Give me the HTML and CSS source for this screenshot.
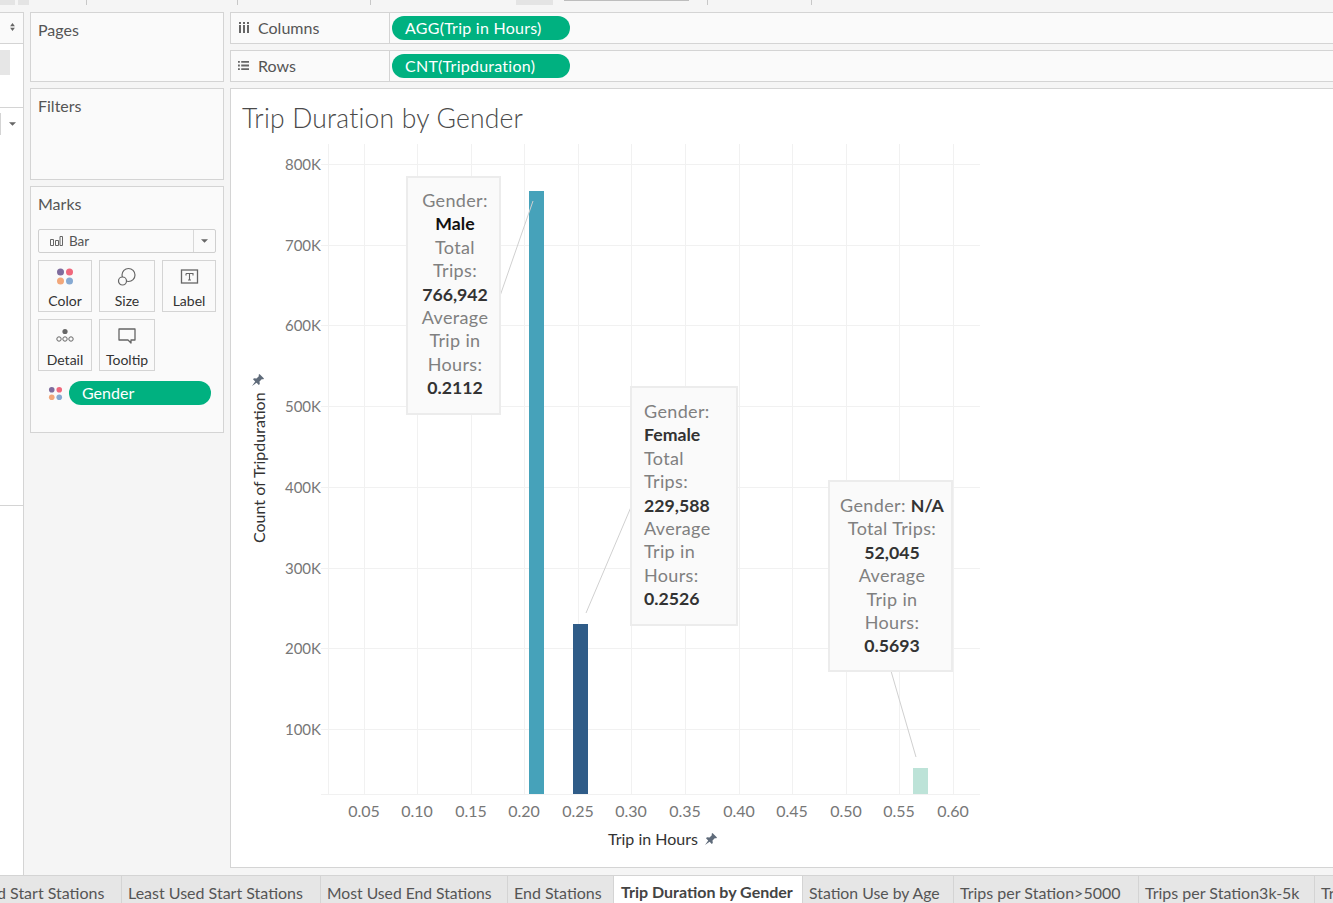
FILE: index.html
```html
<!DOCTYPE html>
<html lang="en">
<head>
<meta charset="utf-8">
<title>Trip Duration by Gender</title>
<link rel="stylesheet" href="styles.css">
</head>
<body>
<div class="topbar">
  <span class="tb-btn tb-a"></span><span class="tb-btn tb-b"></span>
  <span class="tb-tick t1"></span><span class="tb-tick t2"></span><span class="tb-tick t3"></span>
  <span class="tb-btn tb-c"></span><span class="tb-under"></span>
  <span class="tb-tick t4"></span><span class="tb-tick t5"></span>
</div>
<div class="workspace">
  <aside class="data-pane">
    <div class="dp-head"><svg class="updown" viewBox="0 0 6 10"><path d="M3 0 6 4H0zM3 10 0 6h6z"/></svg></div>
    <div class="dp-list"><span class="dp-sel"></span></div>
    <div class="dp-drop"><span class="dp-box"></span><svg class="caret" viewBox="0 0 8 4"><path d="M0 0h8L4 4z"/></svg></div>
    <div class="dp-fields"></div>
    <div class="dp-rest"></div>
  </aside>
  <section class="cards">
    <div class="card pages">Pages</div>
    <div class="card filters">Filters</div>
    <div class="card marks">
      <div class="marks-title">Marks</div>
      <div class="mark-select">
        <svg class="bar-ico" viewBox="0 0 13 10"><path d="M.5 3.500h3v6h-3zM5.500 4.500h3v5h-3zM10 .5h2.500v9H10z" fill="none" stroke="#666"/></svg>
        <span class="ms-label">Bar</span>
        <span class="ms-arrow"><svg class="caret" viewBox="0 0 8 4"><path d="M0 0h8L4 4z"/></svg></span>
      </div>
      <div class="mark-grid">
        <div class="mark-btn">
          <svg class="mb-ico" viewBox="0 0 20 20"><circle cx="5.500" cy="5" r="3.500" fill="#7f6c9d"/><circle cx="14.500" cy="5" r="3.500" fill="#f0687c"/><circle cx="5.500" cy="14" r="3.500" fill="#f2a77a"/><circle cx="14.500" cy="14" r="3.500" fill="#86a9d2"/></svg>
          <span>Color</span>
        </div>
        <div class="mark-btn">
          <svg class="mb-ico" viewBox="0 0 20 20"><circle cx="11.500" cy="8" r="6.500" fill="none" stroke="#666" stroke-width="1.200"/><circle cx="5.500" cy="14" r="4" fill="#fafafa" stroke="#666" stroke-width="1.200"/></svg>
          <span>Size</span>
        </div>
        <div class="mark-btn">
          <svg class="mb-ico" viewBox="0 0 20 20"><rect x="2.500" y="3" width="16" height="13" fill="none" stroke="#666" stroke-width="1.300"/><path d="M7 6.500h7v2M7 6.500v2M10.500 6.500v6.500M9 13h3" fill="none" stroke="#666" stroke-width="1.100"/></svg>
          <span>Label</span>
        </div>
        <div class="mark-btn">
          <svg class="mb-ico" viewBox="0 0 20 20"><circle cx="10" cy="5.500" r="2.600" fill="#666"/><g fill="none" stroke="#666"><circle cx="4" cy="13" r="2.200"/><circle cx="10" cy="13" r="2.200"/><circle cx="16" cy="13" r="2.200"/></g></svg>
          <span>Detail</span>
        </div>
        <div class="mark-btn">
          <svg class="mb-ico" viewBox="0 0 20 20"><path d="M2 3h16v11h-4v3l-3-3H2z" fill="none" stroke="#666" stroke-width="1.300" stroke-linejoin="round"/></svg>
          <span>Tooltip</span>
        </div>
      </div>
      <div class="gender-row">
        <svg class="gender-ico" viewBox="0 0 16 16"><circle cx="4" cy="4" r="3" fill="#7f6c9d"/><circle cx="12" cy="4" r="3" fill="#f0687c"/><circle cx="4" cy="12" r="3" fill="#f2a77a"/><circle cx="12" cy="12" r="3" fill="#86a9d2"/></svg>
        <span class="pill gender-pill">Gender</span>
      </div>
    </div>
  </section>
  <main class="view">
    <div class="shelf">
      <div class="shelf-label">
        <svg class="shelf-ico" viewBox="0 0 11 11"><path d="M1 0h2v2H1zM5 0h2v2H5zM9 0h2v2H9zM1 3h2v8H1zM5 3h2v8H5zM9 3h2v8H9z" fill="#666"/></svg>
        <span>Columns</span>
      </div>
      <div class="shelf-body"><span class="pill shelf-pill">AGG(Trip in Hours)</span></div>
    </div>
    <div class="shelf">
      <div class="shelf-label">
        <svg class="shelf-ico" viewBox="0 0 12 10"><path d="M0 0h2v2H0zM0 4h2v2H0zM0 8h2v2H0zM3.500 0H12v2H3.500zM3.500 4H12v2H3.500zM3.500 8H12v2H3.500z" fill="#666"/></svg>
        <span>Rows</span>
      </div>
      <div class="shelf-body"><span class="pill shelf-pill">CNT(Tripduration)</span></div>
    </div>
    <div class="sheet">
      <h1 class="sheet-title">Trip Duration by Gender</h1>
      <div class="chart">
        <svg class="plot" viewBox="0 0 1102 779" width="1102" height="779">
          <g class="grid">
            <path d="M98.500 56V706M134.500 56V706M187.500 56V706M241.500 56V706M294.500 56V706M348.500 56V706M401.500 56V706M455.500 56V706M509.500 56V706M562.500 56V706M616.500 56V706M669.500 56V706M723.500 56V706"/>
            <path d="M91 76.500H750M91 157.500H750M91 237.500H750M91 318.500H750M91 399.500H750M91 480.500H750M91 560.500H750M91 641.500H750M91 706.500H750"/>
          </g>
          <rect x="299" y="103" width="15" height="603" fill="#46a2ba"/>
          <rect x="343" y="536" width="15" height="170" fill="#2f5c88"/>
          <rect x="683" y="680" width="15" height="26" fill="#bde3d8"/>
          <g class="ticks-y">
            <text x="91" y="82">800K</text><text x="91" y="163">700K</text><text x="91" y="243">600K</text><text x="91" y="324">500K</text><text x="91" y="405">400K</text><text x="91" y="486">300K</text><text x="91" y="566">200K</text><text x="91" y="647">100K</text>
          </g>
          <g class="ticks-x">
            <text x="134" y="729">0.05</text><text x="187" y="729">0.10</text><text x="241" y="729">0.15</text><text x="294" y="729">0.20</text><text x="348" y="729">0.25</text><text x="401" y="729">0.30</text><text x="455" y="729">0.35</text><text x="509" y="729">0.40</text><text x="562" y="729">0.45</text><text x="616" y="729">0.50</text><text x="669" y="729">0.55</text><text x="723" y="729">0.60</text>
          </g>
          <text class="axis-title" transform="translate(35 455) rotate(-90)">Count of Tripduration</text>
          <path class="pin" transform="translate(22 286)" d="M7.500 0 12 4.500 11 5.500 10 5 7.500 7.500 7.800 10 6.800 11 4.600 8.800 0 12 3.200 7.400 1 5.200 2 4.200 4.500 4.500 7 2 6.500 1z"/>
          <text class="axis-title" x="378" y="757">Trip in Hours</text>
          <path class="pin" transform="translate(475 745)" d="M7.500 0 12 4.500 11 5.500 10 5 7.500 7.500 7.800 10 6.800 11 4.600 8.800 0 12 3.200 7.400 1 5.200 2 4.200 4.500 4.500 7 2 6.500 1z"/>
          <g class="leader">
            <line x1="270" y1="208" x2="303" y2="113"/>
            <line x1="401" y1="419" x2="356" y2="525"/>
            <line x1="661" y1="583" x2="686" y2="669"/>
          </g>
        </svg>
        <div class="tip tip-male">Gender:<br><b class="k">Male</b><br>Total<br>Trips:<br><b>766,942</b><br>Average<br>Trip in<br>Hours:<br><b>0.2112</b></div>
        <div class="tip tip-female">Gender:<br><b>Female</b><br>Total<br>Trips:<br><b>229,588</b><br>Average<br>Trip in<br>Hours:<br><b>0.2526</b></div>
        <div class="tip tip-na">Gender: <b>N/A</b><br>Total Trips:<br><b>52,045</b><br>Average<br>Trip in<br>Hours:<br><b>0.5693</b></div>
      </div>
    </div>
  </main>
</div>
<nav class="tabs">
  <span class="tab t-start">d Start Stations</span>
  <span class="tab t-least">Least Used Start Stations</span>
  <span class="tab t-most">Most Used End Stations</span>
  <span class="tab t-end">End Stations</span>
  <span class="tab active t-dur">Trip Duration by Gender</span>
  <span class="tab t-age">Station Use by Age</span>
  <span class="tab t-5k">Trips per Station&gt;5000</span>
  <span class="tab t-3k">Trips per Station3k-5k</span>
  <span class="tab t-last">Tr</span>
</nav>
</body>
</html>
```
FILE: styles.css
```css
* { box-sizing: border-box; }
html, body { margin: 0; height: 100%; overflow: hidden; }
body {
  width: 1333px; height: 903px; display: flex; flex-direction: column;
  background: #f5f5f5; color: #555;
  font-family: Lato, "Open Sans", sans-serif; font-size: 16px;
}
.topbar { height: 12px; flex: none; position: relative; background: #f5f5f5; }
.tb-btn, .tb-tick, .tb-under { position: absolute; top: 0; }
.tb-btn { background: #e4e4e4; height: 5px; }
.tb-a { left: 0; width: 15px; }
.tb-b { left: 18px; width: 11px; }
.tb-c { left: 516px; width: 37px; }
.tb-tick { width: 1px; height: 5px; background: #c8c8c8; }
.t1 { left: 86px; } .t2 { left: 237px; } .t3 { left: 370px; }
.t4 { left: 707px; } .t5 { left: 811px; }
.tb-under { left: 564px; width: 125px; height: 1px; background: #bdbdbd; }

.workspace { flex: 1; display: flex; min-height: 0; }
.data-pane {
  width: 24px; flex: none; background: #fff; border-right: 1px solid #d4d4d4;
  display: flex; flex-direction: column;
}
.dp-head { height: 32px; background: #fafafa; border-bottom: 1px solid #d4d4d4; border-top: 1px solid #d4d4d4; position: relative; }
.updown { position: absolute; left: 10px; top: 10px; width: 5px; height: 8px; fill: #666; }
.dp-list { height: 63px; padding-top: 6px; }
.dp-sel { display: block; width: 10px; height: 25px; background: #e6e6e6; }
.dp-drop { height: 34px; border-top: 1px solid #d4d4d4; position: relative; background: #fff; }
.dp-box { position: absolute; left: 0; top: 5px; width: 1px; height: 22px; background: #d4d4d4; }
.dp-drop .caret { position: absolute; left: 9px; top: 14px; }
.dp-fields { height: 365px; border-bottom: 1px solid #d4d4d4; }
.dp-rest { flex: 1; background: #fff; }
.caret { width: 7px; height: 4px; fill: #666; display: block; }

.cards { width: 194px; flex: none; margin-left: 6px; display: flex; flex-direction: column; gap: 6px; }
.card { background: #fafafa; border: 1px solid #d4d4d4; padding: 7px 7px; color: #555; }
.pages { height: 70px; }
.filters { height: 92px; }
.marks { height: 247px; padding: 8px 7px 0; }
.marks-title { line-height: 18px; }
.mark-select {
  margin-top: 16px; height: 24px; border: 1px solid #cfcfcf; border-radius: 2px; background: #fafafa;
  display: flex; align-items: center; padding-left: 11px; font-size: 13.500px;
}
.bar-ico { width: 13px; height: 10px; margin-right: 6px; }
.ms-label { flex: 1; }
.ms-arrow { width: 22px; height: 100%; border-left: 1px solid #d8d8d8; display: flex; align-items: center; justify-content: center; }
.mark-grid { margin-top: 7px; display: grid; grid-template-columns: 54px 56px 54px; column-gap: 7px; row-gap: 7px; width: 178px; }
.mark-btn {
  height: 52px; border: 1px solid #d4d4d4; background: #fafafa; display: flex; flex-direction: column; align-items: center;
  font-size: 14px; color: #333; padding-top: 6px;
}
.mark-btn span { line-height: 16px; margin-top: 6px; }
.mb-ico { width: 20px; height: 20px; display: block; }
.gender-row { margin-top: 10px; display: flex; align-items: center; gap: 6px; padding-left: 10px; }
.gender-ico { width: 15px; height: 15px; }
.pill { background: #00b180; color: #fff; border-radius: 12px; display: flex; align-items: center; padding-bottom: 2px; }
.gender-pill { width: 142px; height: 24px; padding-left: 13px; }

.view { flex: 1; margin-left: 6px; display: flex; flex-direction: column; gap: 6px; min-width: 0; }
.shelf { height: 32px; flex: none; display: flex; background: #fafafa; border: 1px solid #d4d4d4; border-right: 0; }
.shelf-label { width: 159px; flex: none; border-right: 1px solid #d4d4d4; display: flex; align-items: center; padding: 0 0 2px 7px; gap: 9px; }
.shelf-ico { width: 11px; height: 11px; }
.shelf-body { flex: 1; display: flex; align-items: center; padding-left: 2px; }
.shelf-pill { width: 178px; height: 24px; padding-left: 13px; letter-spacing: .25px; }

.sheet { flex: 1; margin-bottom: 7px; background: #fff; border: 1px solid #d4d4d4; border-right: 0; position: relative; min-height: 0; }
.sheet-title { margin: 0; position: absolute; left: 11px; top: 13px; font-weight: 300; font-size: 26.500px; line-height: 32px; color: #4a4a4a; letter-spacing: .2px; z-index: 1; }
.chart { position: absolute; left: -1px; top: -1px; right: 0; bottom: 0; }
.plot { display: block; position: absolute; left: 0; top: 0; }
.grid path { fill: none; stroke: #f1f1f1; stroke-width: 1; }
.ticks-y text { text-anchor: end; font-size: 15px; fill: #777; font-family: Lato, sans-serif; }
.ticks-x text { text-anchor: middle; font-size: 16px; fill: #777; font-family: Lato, sans-serif; }
.axis-title { font-size: 16px; fill: #333; font-family: Lato, sans-serif; }
.pin { fill: #5f6b7a; }
.leader line { stroke: #d0d0d0; stroke-width: 1; }

.tip {
  position: absolute; background: #fafafa; border: 2px solid #ececec;
  text-align: center; color: #808080; font-size: 18px; letter-spacing: .35px; line-height: 23.400px; padding-top: 12px;
}
.tip b { font-weight: 700; font-size: 17.700px; color: #333; letter-spacing: 0; }
.tip b.k { color: #111; }
.tip-male { left: 176px; top: 88px; width: 95px; height: 239px; padding: 11px 0 0 3px; }
.tip-female { left: 400px; top: 298px; width: 108px; height: 240px; text-align: left; padding-left: 12px; }
.tip-na { left: 598px; top: 392px; width: 125px; height: 192px; padding-left: 3px; }

.tabs { height: 28px; flex: none; display: flex; background: #e6e6e6; border-top: 1px solid #d4d4d4; overflow: hidden; }
.tab { flex: none; border-right: 1px solid #d4d4d4; line-height: 34px; height: 28px; padding-left: 6px; white-space: nowrap; color: #555; font-size: 16px; }
.tab.active { background: #fff; color: #444; font-weight: 700; line-height: 32px; padding-left: 7px; }
.t-start { width: 122px; padding-left: 0; text-indent: -3px; }
.t-least { width: 199px; }
.t-most { width: 187px; font-size: 15.700px; }
.t-end { width: 106px; }
.t-dur { width: 189px; }
.t-age { width: 151px; font-size: 15.800px; }
.t-5k { width: 185px; }
.t-3k { width: 176px; }
.t-last { width: 30px; border-right: 0; }
```
